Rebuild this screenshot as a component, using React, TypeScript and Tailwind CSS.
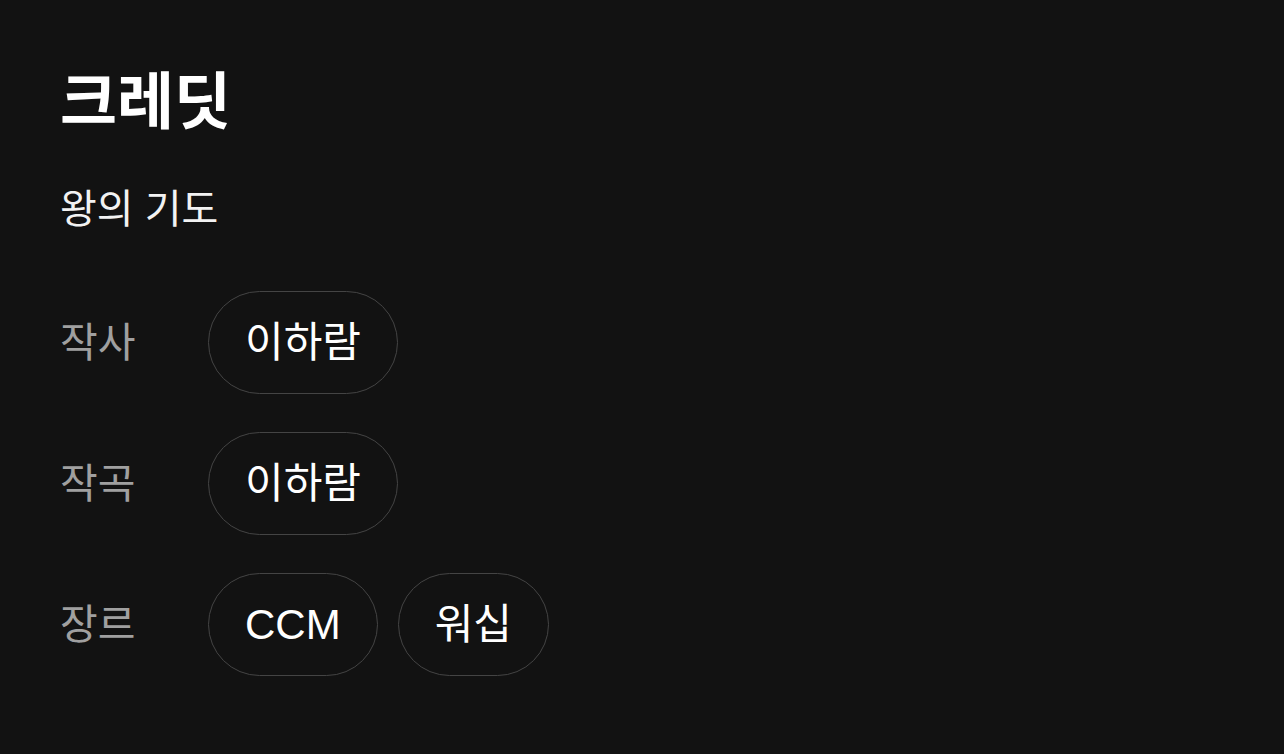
import React from 'react';

interface CreditRow {
  label: string;
  values: string[];
}

const rows: CreditRow[] = [
  { label: '작사', values: ['이하람'] },
  { label: '작곡', values: ['이하람'] },
  { label: '장르', values: ['CCM', '워십'] },
];

const font = { fontFamily: '"Liberation Sans", "Noto Sans CJK KR", sans-serif' };

const App: React.FC = () => {
  return (
    <div className="min-h-screen w-full bg-[#121212] text-white pl-[60px] pt-[69px]" style={font}>
      <h1 className="text-[62px] leading-[68px] font-bold">크레딧</h1>
      <p className="mt-[47px] text-[40px] leading-[50px] text-[#f2f2f2]">왕의 기도</p>

      <div className="mt-[57px] flex flex-col gap-[38px]">
        {rows.map((row) => (
          <div key={row.label} className="flex items-center">
            <span className="w-[148px] text-[41px] leading-[50px] text-[#a0a0a0]">{row.label}</span>
            <div className="flex gap-5">
              {row.values.map((v) => (
                <span
                  key={v}
                  className="h-[103px] px-9 flex items-center rounded-full border border-[#444444] text-[42px] text-white"
                >
                  {v}
                </span>
              ))}
            </div>
          </div>
        ))}
      </div>
    </div>
  );
};

export default App;
